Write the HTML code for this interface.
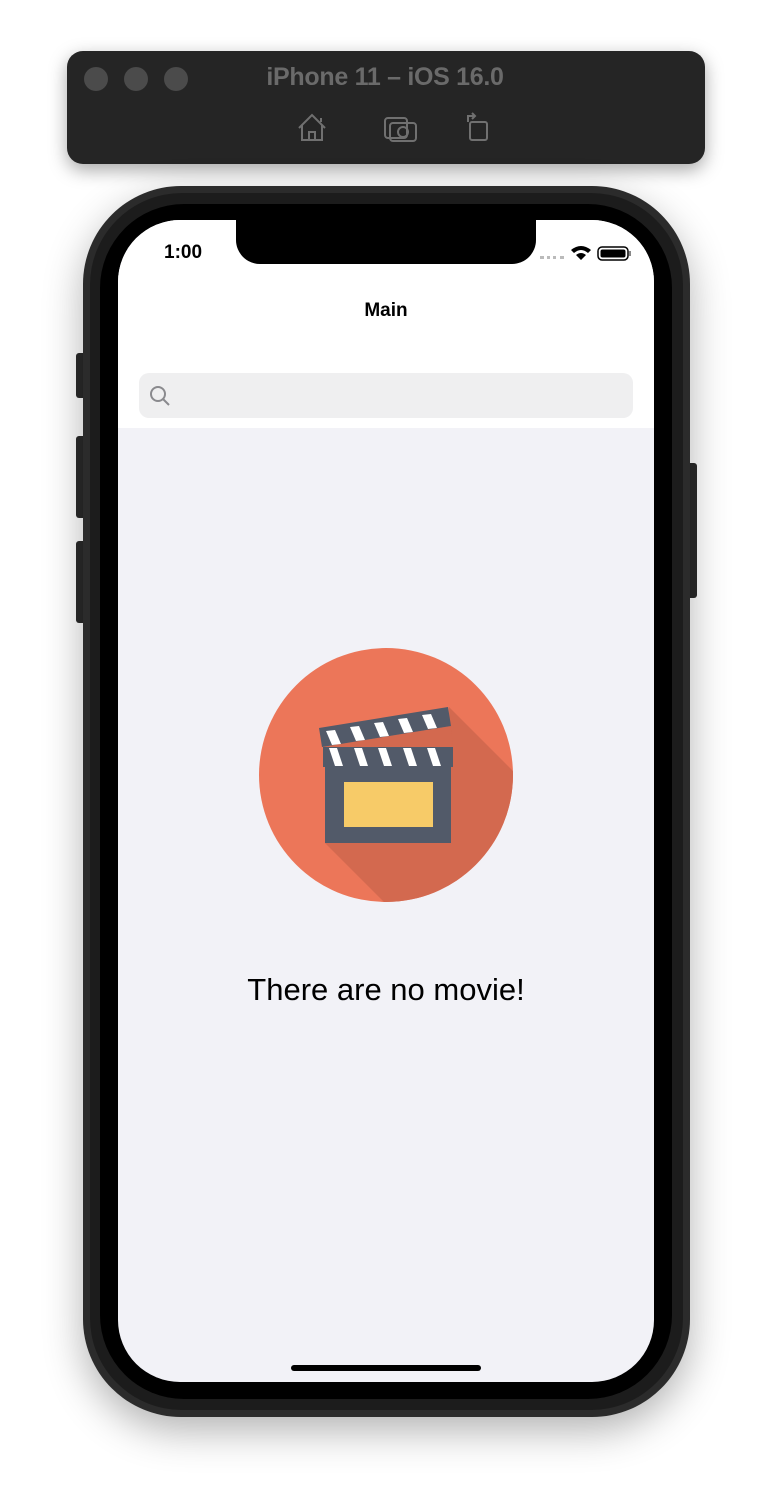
<!DOCTYPE html><html><head><style>
body{margin:0;width:772px;height:1504px;background:#fff;position:relative;overflow:hidden;font-family:"Liberation Sans",sans-serif}
.a{position:absolute}
</style></head><body>
<div class="a" style="left:67px;top:51px;width:638px;height:113px;border-radius:16px;background:#252525;box-shadow:0 6px 18px rgba(0,0,0,.35)"></div>
<div class="a" style="left:84px;top:67px;width:24px;height:24px;border-radius:50%;background:#4b4b4b"></div>
<div class="a" style="left:124px;top:67px;width:24px;height:24px;border-radius:50%;background:#4b4b4b"></div>
<div class="a" style="left:164px;top:67px;width:24px;height:24px;border-radius:50%;background:#4b4b4b"></div>
<div class="a" style="left:230px;top:63px;width:310px;text-align:center;color:#6a6a6a;font-weight:bold;font-size:25px;letter-spacing:-0.3px">iPhone 11 – iOS 16.0</div>
<svg class="a" style="left:290px;top:110px" width="210" height="36" fill="none" stroke="#707070" stroke-width="2">
<path d="M9 18 L22 5 L35 18 M12 15 V30 H32 V15 M19 30 V22 H25 V30"/><path d="M31 8 V12"/>
<rect x="95" y="8" width="22" height="20" rx="3"/><rect x="100" y="13" width="26" height="18" rx="3"/><circle cx="113" cy="22" r="5"/>
<rect x="180" y="12" width="17" height="18" rx="2"/><path d="M178 12 V6 H185 M182 3 L185 6 L182 9"/>
</svg>
<div class="a" style="left:76px;top:353px;width:10px;height:45px;border-radius:3px;background:#2a2a2a"></div>
<div class="a" style="left:76px;top:436px;width:10px;height:82px;border-radius:3px;background:#2a2a2a"></div>
<div class="a" style="left:76px;top:541px;width:10px;height:82px;border-radius:3px;background:#2a2a2a"></div>
<div class="a" style="left:687px;top:463px;width:10px;height:135px;border-radius:3px;background:#2a2a2a"></div>
<div class="a" style="left:83px;top:186px;width:607px;height:1231px;border-radius:98px;background:#2b2b2b;box-shadow:0 14px 40px rgba(0,0,0,.3)"></div>
<div class="a" style="left:90px;top:193px;width:593px;height:1217px;border-radius:92px;background:#1c1c1c"></div>
<div class="a" style="left:100px;top:204px;width:572px;height:1195px;border-radius:84px;background:#000"></div>
<div class="a" style="left:118px;top:220px;width:536px;height:1162px;border-radius:62px;background:#f2f2f7;overflow:hidden">
<div class="a" style="left:0;top:0;width:536px;height:208px;background:#fff"></div>
<div class="a" style="left:118px;top:-2px;width:300px;height:46px;background:#000;border-radius:0 0 24px 24px"></div>
<div class="a" style="left:46px;top:22px;font-size:19px;font-weight:bold;color:#000">1:00</div>
<div class="a" style="left:422px;top:36px;width:24px;height:3px;border-top:3px dotted #bbb"></div>
<svg class="a" style="left:452px;top:24px" width="62" height="18"><path d="M1 6 Q11 -2 21 6 L18 9 Q11 3 4 9Z M6 11 Q11 7 16 11 L11 16Z" fill="#000"/><rect x="28" y="3" width="30" height="13" rx="4" fill="none" stroke="#000" stroke-width="1.5"/><rect x="30.5" y="5.5" width="25" height="8" rx="2" fill="#000"/><rect x="59" y="7" width="2" height="5" fill="#888"/></svg>
<div class="a" style="left:0;top:80px;width:536px;text-align:center;font-size:19px;font-weight:bold;color:#000">Main</div>
<div class="a" style="left:21px;top:153px;width:494px;height:45px;border-radius:10px;background:#efeff0"></div>
<svg class="a" style="left:30px;top:164px" width="24" height="24" fill="none" stroke="#8a8a8e" stroke-width="2"><circle cx="10" cy="10" r="7"/><path d="M15 15 L21 21"/></svg>
<div class="a" style="left:0;top:752px;width:536px;text-align:center;font-size:31px;color:#000">There are no movie!</div>
<div class="a" style="left:173px;top:1145px;width:190px;height:6px;border-radius:3px;background:#000"></div>
</div>
<svg class="a" style="left:0;top:0" width="772" height="1504">
<defs><clipPath id="c"><circle cx="386" cy="775" r="127"/></clipPath></defs>
<circle cx="386" cy="775" r="127" fill="#ec7659"/>
<polygon clip-path="url(#c)" fill="#d3694f" points="449,707 660,918 525,1043 325,843 451,843"/>
<polygon points="322,747 451,726 453,747" fill="#d3694f"/>
<polygon points="319,728 448,707 451,726 322,747" fill="#525a69"/>
<g fill="#fff"><polygon points="326,731 335,730 341,744 332,745"/><polygon points="350,727 359,726 365,740 356,741"/><polygon points="374,723 383,722 389,736 380,737"/><polygon points="398,719 407,718 413,732 404,733"/><polygon points="422,715 431,714 437,728 428,729"/></g>
<rect x="323" y="747" width="130" height="20" fill="#525a69"/>
<g fill="#fff"><polygon points="329,748 337,748 343,766 335,766"/><polygon points="354,748 362,748 368,766 360,766"/><polygon points="378,748 386,748 392,766 384,766"/><polygon points="403,748 411,748 417,766 409,766"/><polygon points="427,748 435,748 441,766 433,766"/></g>
<rect x="325" y="767" width="126" height="76" fill="#525a69"/>
<rect x="344" y="782" width="89" height="45" fill="#f7cb68"/>
</svg>
</body></html>
